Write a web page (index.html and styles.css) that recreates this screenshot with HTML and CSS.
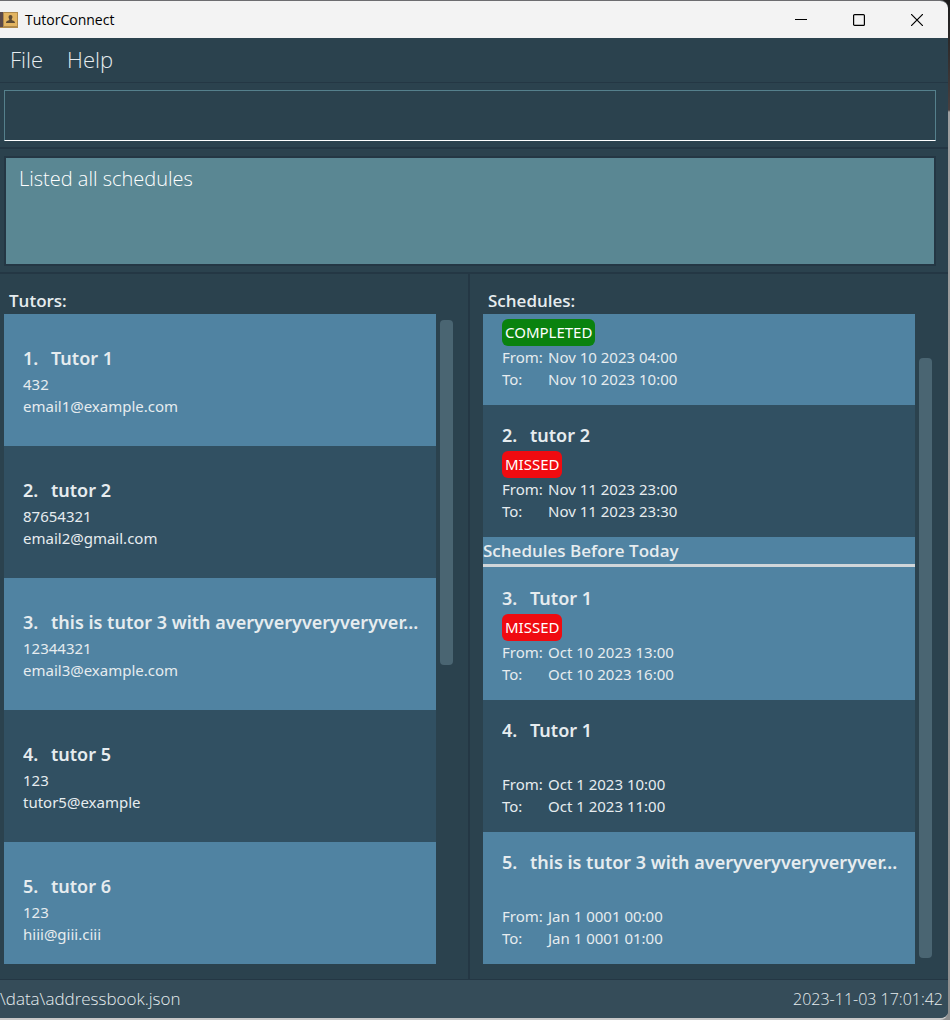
FILE: index.html
```html
<!DOCTYPE html>
<html lang="en">
<head>
<meta charset="utf-8">
<title>TutorConnect</title>
<link rel="stylesheet" href="styles.css">
</head>
<body>
<div class="window">
  <header class="titlebar">
    <svg class="app-icon" width="18" height="18" viewBox="0 0 18 18" aria-hidden="true">
      <rect x="0" y="1" width="18" height="16" fill="#b08a4c"/>
      <rect x="0" y="1" width="3" height="15" fill="#5a4a4a"/>
      <rect x="4" y="2" width="13" height="13" fill="#e3b562"/>
      <path d="M10.500 4a2 2 0 0 1 2 2c0 1-.8 1.600-.8 2.800 0 .9 3.300.6 3.300 3.200H6c0-2.600 3.300-2.300 3.300-3.200 0-1.200-.8-1.800-.8-2.800a2 2 0 0 1 2-2z" fill="#5d4b35"/>
    </svg>
    <h1 class="app-name">TutorConnect</h1>
    <div class="window-controls">
      <button class="window-button" type="button" aria-label="Minimize">
        <svg width="12" height="12" viewBox="0 0 12 12"><path d="M0 5.500h12" stroke="#000" fill="none"/></svg>
      </button>
      <button class="window-button" type="button" aria-label="Maximize">
        <svg width="12" height="12" viewBox="0 0 12 12"><rect x=".6" y=".6" width="10.800" height="10.800" rx="1" stroke="#000" stroke-width="1.200" fill="none"/></svg>
      </button>
      <button class="window-button" type="button" aria-label="Close">
        <svg width="12" height="12" viewBox="0 0 12 12"><path d="M0 0l12 12M12 0L0 12" stroke="#000" stroke-width="1.200" fill="none"/></svg>
      </button>
    </div>
  </header>
  <nav class="menubar">
    <button class="menu" type="button">File</button>
    <button class="menu" type="button">Help</button>
  </nav>
  <div class="command-pane">
    <input class="command-box" type="text" aria-label="Command">
  </div>
  <div class="result-pane">
    <output class="result-box">Listed all schedules</output>
  </div>
  <main class="panels">
    <section class="panel">
      <h2 class="panel-title">Tutors:</h2>
      <div class="list-view">
        <ul class="list">
          <li class="card"><h3 class="name"><span>1.</span>Tutor 1</h3><p>432</p><p>email1@example.com</p></li>
          <li class="card"><h3 class="name"><span>2.</span>tutor 2</h3><p>87654321</p><p>email2@gmail.com</p></li>
          <li class="card"><h3 class="name"><span>3.</span>this is tutor 3 with averyveryveryveryver...</h3><p>12344321</p><p>email3@example.com</p></li>
          <li class="card"><h3 class="name"><span>4.</span>tutor 5</h3><p>123</p><p>tutor5@example</p></li>
          <li class="card"><h3 class="name"><span>5.</span>tutor 6</h3><p>123</p><p>hiii@giii.ciii</p></li>
        </ul>
        <div class="track"><div class="thumb" style="height:54%"></div></div>
      </div>
    </section>
    <section class="panel panel-schedules">
      <h2 class="panel-title">Schedules:</h2>
      <div class="list-view">
        <ul class="list">
          <li class="card schedule schedule-first">
            <div class="status"><span class="badge completed">COMPLETED</span></div>
            <dl class="times"><dt>From:</dt><dd>Nov 10 2023 04:00</dd><dt>To:</dt><dd>Nov 10 2023 10:00</dd></dl>
          </li>
          <li class="card schedule">
            <h3 class="name"><span>2.</span>tutor 2</h3>
            <div class="status"><span class="badge missed">MISSED</span></div>
            <dl class="times"><dt>From:</dt><dd>Nov 11 2023 23:00</dd><dt>To:</dt><dd>Nov 11 2023 23:30</dd></dl>
          </li>
          <li class="group">
            <h3 class="group-title">Schedules Before Today</h3>
            <div class="card schedule">
              <h3 class="name"><span>3.</span>Tutor 1</h3>
              <div class="status"><span class="badge missed">MISSED</span></div>
              <dl class="times"><dt>From:</dt><dd>Oct 10 2023 13:00</dd><dt>To:</dt><dd>Oct 10 2023 16:00</dd></dl>
            </div>
          </li>
          <li class="card schedule">
            <h3 class="name"><span>4.</span>Tutor 1</h3>
            <div class="status"></div>
            <dl class="times"><dt>From:</dt><dd>Oct 1 2023 10:00</dd><dt>To:</dt><dd>Oct 1 2023 11:00</dd></dl>
          </li>
          <li class="card schedule">
            <h3 class="name"><span>5.</span>this is tutor 3 with averyveryveryveryver...</h3>
            <div class="status"></div>
            <dl class="times"><dt>From:</dt><dd>Jan 1 0001 00:00</dd><dt>To:</dt><dd>Jan 1 0001 01:00</dd></dl>
          </li>
        </ul>
        <div class="track track-end"><div class="thumb" style="height:94%"></div></div>
      </div>
    </section>
  </main>
  <footer class="statusbar"><span>\data\addressbook.json</span><time>2023-11-03 17:01:42</time></footer>
</div>
</body>
</html>
```
FILE: styles.css
```css
* { box-sizing: border-box; margin: 0; padding: 0; }
body {
  background: linear-gradient(#1c1c1c 0, #4a4040 110px, #a0a0a0 112px, #8f8f8f 100%);
  font-family: "Noto Sans", "Open Sans", sans-serif;
  font-size: 15px;
  line-height: 22px;
  color: #e6ecef;
}
button, input { font: inherit; color: inherit; background: none; border: 0; }
ul { list-style: none; }
.window {
  display: flex;
  flex-direction: column;
  height: 100vh;
  margin-right: 2px;
  background: #2b424e;
  border-top: 1px solid #6d6d70;
  border-bottom: 2px solid #c8c8c8;
  border-radius: 0 8px 8px 0;
  overflow: hidden;
}
.titlebar {
  display: flex;
  align-items: center;
  height: 37px;
  flex: none;
  background: #f3f3f3;
  color: #000;
}
.app-name { margin-left: 7px; font-family: "Open Sans", sans-serif; font-size: 14px; font-weight: 400; }
.window-controls { display: flex; margin: 0 2px 0 auto; }
.window-button {
  display: flex;
  align-items: center;
  justify-content: center;
  width: 58px;
  height: 36px;
}
.menubar, .command-box, .result-box, .statusbar {
  font-family: "Open Sans", sans-serif;
  font-weight: 300;
}
.menubar {
  display: flex;
  gap: 24px;
  height: 45px;
  flex: none;
  padding: 0 0 2px 10px;
  border-bottom: 1px solid #243744;
  font-size: 22px;
}
.command-pane { padding: 7px 12px 6px 4px; border-bottom: 2px solid #243744; }
.command-box {
  display: block;
  width: 100%;
  height: 51px;
  padding: 0 14px;
  border: 1px solid #55808c;
  border-bottom-color: #fff;
  font-size: 20px;
}
.result-pane { padding: 7px 12px 6px 4px; border-bottom: 2px solid #243744; }
.result-box {
  display: block;
  height: 110px;
  padding: 8px 13px;
  border: 2px solid #243744;
  border-top-width: 2px;
  background: #5a8793;
  color: #fff;
  font-size: 20px;
  line-height: 26px;
}
.panels {
  display: grid;
  grid-template-columns: 39fr 40fr;
  grid-template-rows: minmax(0, 1fr);
  flex: 1;
  min-height: 0;
  border-bottom: 1px solid #243744;
}
.panel {
  display: flex;
  flex-direction: column;
  min-width: 0;
  padding: 14px 15px 15px 4px;
}
.panel-schedules { padding-left: 13px; padding-right: 16px; border-left: 2px solid #243744; }
.panel-title, .group-title { font-family: "Open Sans", sans-serif; font-size: 17px; font-weight: 600; }
.panel-title { padding-left: 5px; margin-bottom: 1px; line-height: 25px; }
.list-view { display: flex; gap: 4px; flex: 1; min-height: 0; }
.list { display: flex; flex-direction: column; flex: 1; min-width: 0; overflow: hidden; }
.list > li { flex: none; background: #315062; }
.list > li:nth-child(odd) { background: #5083a2; }
.card { height: 132px; padding: 30px 0 0 19px; }
.schedule { padding-top: 16px; }
.schedule-first { height: 91px; padding-top: 4px; }
.name {
  margin-bottom: 1px;
  overflow: hidden;
  font-size: 18px;
  font-weight: 600;
  line-height: 28px;
  white-space: nowrap;
  text-overflow: ellipsis;
}
.name span { display: inline-block; min-width: 28px; }
.status { display: flex; height: 28px; padding-top: 1px; }
.badge { padding: 0 3px; border-radius: 6px; line-height: 27px; color: #fff; }
.completed { background: #0a820f; }
.missed { background: #f00b10; }
.times { display: grid; grid-template-columns: 46px auto; }
.group-title { border-bottom: 3px solid #d0d6da; line-height: 27px; }
.group .card { height: 133px; padding-top: 17px; }
.track { display: flex; flex-direction: column; width: 13px; padding: 6px 0; }
.track-end { justify-content: flex-end; }
.thumb { border-radius: 4px; background: #4a6572; }
.statusbar {
  display: flex;
  justify-content: space-between;
  align-items: center;
  flex: none;
  height: 38px;
  padding-right: 5px;
  background: #354c59;
  font-size: 17px;
}
.statusbar time { font-size: 16px; }
```
